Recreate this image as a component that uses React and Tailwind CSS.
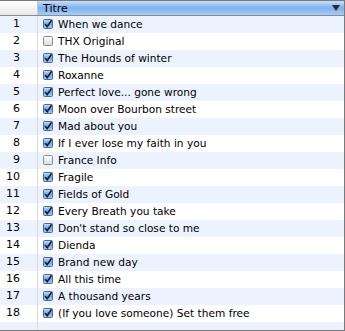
import React from "react";

const songs = [
  ["When we dance", true],
  ["THX Original", false],
  ["The Hounds of winter", true],
  ["Roxanne", true],
  ["Perfect love... gone wrong", true],
  ["Moon over Bourbon street", true],
  ["Mad about you", true],
  ["If I ever lose my faith in you", true],
  ["France Info", false],
  ["Fragile", true],
  ["Fields of Gold", true],
  ["Every Breath you take", true],
  ["Don't stand so close to me", true],
  ["Dienda", true],
  ["Brand new day", true],
  ["All this time", true],
  ["A thousand years", true],
  ["(If you love someone) Set them free", true],
];

function Check({ checked }) {
  if (!checked) {
    return (
      <svg width="10" height="10" viewBox="0 0 10 10" className="shrink-0">
        <defs>
          <linearGradient id="ug" x1="0" y1="0" x2="0" y2="1">
            <stop offset="0" stopColor="#ffffff" />
            <stop offset="1" stopColor="#dcdcdc" />
          </linearGradient>
        </defs>
        <rect x="0.5" y="0.5" width="9" height="9" rx="1" fill="url(#ug)" stroke="#8a8a8a" />
      </svg>
    );
  }
  return (
    <svg width="10" height="10" viewBox="0 0 10 10" className="shrink-0">
      <defs>
        <linearGradient id="cg" x1="0" y1="0" x2="0" y2="1">
          <stop offset="0" stopColor="#cfe3fb" />
          <stop offset="0.5" stopColor="#6fa4e6" />
          <stop offset="1" stopColor="#a8cdf6" />
        </linearGradient>
      </defs>
      <rect x="0.5" y="0.5" width="9" height="9" rx="1" fill="url(#cg)" stroke="#4a6a96" />
      <path d="M2.2 5.2 L4.2 7.6 L8.6 1.2" fill="none" stroke="#1a1a2a" strokeWidth="1.6" />
    </svg>
  );
}

export default function App() {
  return (
    <div
      className="w-[345px] h-[331px] bg-white border-t border-r border-b border-[#7a7a7a] overflow-hidden flex flex-col text-black"
      style={{ fontFamily: '"DejaVu Sans", "Liberation Sans", sans-serif' }}
    >
      <div className="flex h-[15px] border-b border-[#8c8c8c] shrink-0">
        <div className="w-[38px] border-r border-[#c8c8c8] bg-gradient-to-b from-[#ffffff] via-[#f4f4f4] to-[#e6e6e6]" />
        <div className="flex-1 flex items-center pl-[5px] pr-[4px] bg-gradient-to-b from-[#c9def8] via-[#7eb2ef] to-[#a7cdf9]">
          <span className="text-[11px] leading-none flex-1">Titre</span>
          <svg width="8" height="6" viewBox="0 0 8 6">
            <path d="M0 0 L8 0 L4 6 Z" fill="#2a2a2a" />
          </svg>
        </div>
      </div>
      <div className="flex-1 flex flex-col">
        {songs.map(([t, c], i) => (
          <div
            key={i}
            className={`flex h-[17px] shrink-0 items-center ${i % 2 === 0 ? "bg-[#edf3fe]" : "bg-white"}`}
          >
            <div className="w-[38px] h-full border-r border-[#d9d9d9] flex items-center justify-end pr-[17px] text-[11px]">
              {i + 1}
            </div>
            <div className="flex items-center pl-[5px] gap-[5px] text-[10.6px]">
              <Check checked={c} />
              <span>{t}</span>
            </div>
          </div>
        ))}
        <div className="flex flex-1 bg-[#edf3fe]">
          <div className="w-[38px] h-full border-r border-[#d9d9d9]" />
        </div>
      </div>
    </div>
  );
}
